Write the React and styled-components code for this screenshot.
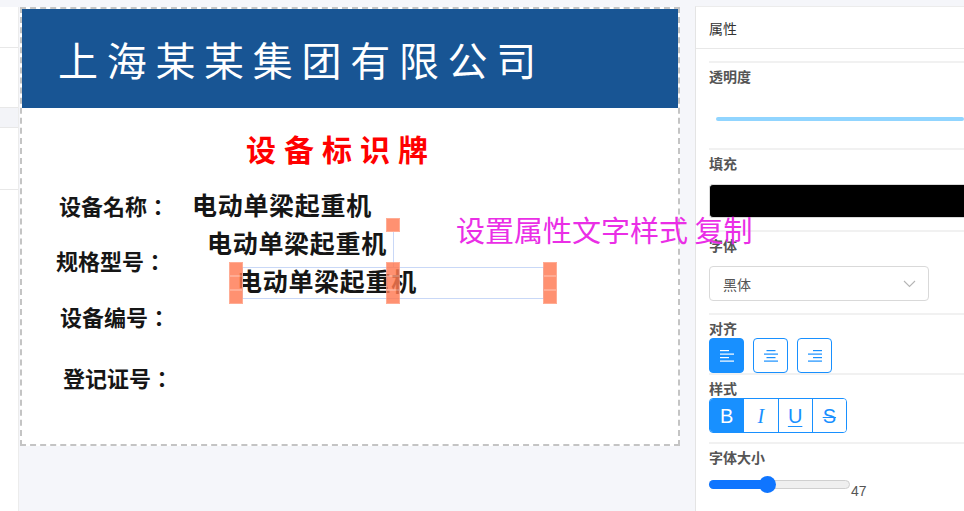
import React from "react";
import styled, { createGlobalStyle } from "styled-components";

const GlobalStyle = createGlobalStyle`
  html, body { margin: 0; padding: 0; }
  body {
    background: #f5f6fa;
    font-family: "Noto Sans CJK SC", "Noto Sans", sans-serif;
    overflow: hidden;
  }
  * { box-sizing: border-box; }
`;

const Page = styled.div`
  display: flex;
  height: 511px;
  width: 964px;
  padding-top: 7px;
  overflow: hidden;
`;

const Sidebar = styled.div`
  width: 19px;
  flex: none;
  background: #fff;
  border-right: 1px solid #ececec;
  display: flex;
  flex-direction: column;
`;

const SideRow = styled.div`
  height: ${(p) => p.$h}px;
  flex: none;
  border-bottom: 1px solid #e8e8e8;
  background: ${(p) => (p.$grey ? "#f3f4f8" : "#fff")};
`;

const Workspace = styled.div`
  flex: none;
  width: 676px;
  padding-left: 1px;
`;

const Canvas = styled.div`
  position: relative;
  z-index: 2;
  width: 660px;
  height: 439px;
  border: 2px dashed #c4c4c4;
  background: #fff;
`;

const Banner = styled.div`
  height: 99px;
  background: #185594;
`;

const CanvasText = styled.div`
  position: absolute;
  left: ${(p) => p.$x}px;
  top: ${(p) => p.$y}px;
  font-size: ${(p) => p.$size}px;
  line-height: 1;
  white-space: nowrap;
  color: ${(p) => p.$color || "#111"};
  font-weight: ${(p) => p.$weight || 400};
  letter-spacing: ${(p) => p.$ls || 0}px;
`;

const FieldLabel = styled(CanvasText)`
  font-family: "Noto Sans CJK TC", "Noto Sans CJK SC", sans-serif;
  font-weight: 700;
  font-size: 22px;
  color: #161616;
`;

const FieldValue = styled(CanvasText)`
  font-weight: 700;
  font-size: 25px;
  letter-spacing: 0.7px;
  color: #161616;
`;

const Handle = styled.div`
  position: absolute;
  left: ${(p) => p.$x}px;
  top: ${(p) => p.$y}px;
  width: 14px;
  height: 14px;
  background: #ff7a52;
  opacity: 0.82;
  box-shadow: inset 0 0 0 1px rgba(255, 255, 255, 0.25);
`;

const SelectBox = styled.div`
  position: absolute;
  left: ${(p) => p.$x}px;
  top: ${(p) => p.$y}px;
  width: ${(p) => p.$w}px;
  height: ${(p) => p.$h}px;
  border: 1px solid #c9d8f7;
`;

const VLine = styled.div`
  position: absolute;
  left: ${(p) => p.$x}px;
  top: ${(p) => p.$y}px;
  width: 1px;
  height: ${(p) => p.$h}px;
  background: #c9d8f7;
`;

const Panel = styled.div`
  position: relative;
  z-index: 1;
  margin-top: -1px;
  width: 269px;
  flex: none;
  background: #fff;
  border-left: 1px solid #e4e4e4;
  border-top: 1px solid #ececec;
`;

const PanelHeader = styled.div`
  height: 42px;
  display: flex;
  align-items: center;
  padding-left: 13px;
  font-size: 14px;
  color: #333;
  border-bottom: 1px solid #e8e8e8;
`;

const PanelBody = styled.div`
  padding: 12px 0 0 13px;
`;

const Section = styled.div`
  border-top: 2px solid #f1f1f1;
  padding-top: 3px;
  padding-bottom: ${(p) => p.$pb || 0}px;
`;

const Label = styled.div`
  height: 20px;
  line-height: 20px;
  font-size: 14px;
  font-weight: 700;
  color: #555;
`;

const Control = styled.div`
  margin-top: ${(p) => p.$mt || 0}px;
  margin-left: ${(p) => p.$ml || 0}px;
`;

const OpacityLine = styled.div`
  height: 4px;
  border-radius: 2px;
  background: #91d5ff;
`;

const ColorSwatch = styled.div`
  height: 34px;
  background: #000;
  border-radius: 4px 0 0 4px;
  border: 1px solid #d9d9d9;
  border-right: none;
`;

const SelectField = styled.div`
  width: 220px;
  height: 35px;
  border: 1px solid #d9d9d9;
  border-radius: 4px;
  display: flex;
  align-items: center;
  justify-content: space-between;
  padding: 0 12px 0 13px;
  font-size: 14px;
  color: #555;
`;

const ButtonRow = styled.div`
  display: flex;
  gap: 9px;
`;

const AlignButton = styled.div`
  width: 35px;
  height: 35px;
  border-radius: 4px;
  display: flex;
  align-items: center;
  justify-content: center;
  background: ${(p) => (p.$active ? "#1890ff" : "#fff")};
  border: 1px solid #1890ff;
  color: ${(p) => (p.$active ? "#fff" : "#1890ff")};
`;

const StyleGroup = styled.div`
  display: flex;
  width: 138px;
  height: 35px;
  border: 1px solid #1890ff;
  border-radius: 4px;
  overflow: hidden;
`;

const StyleButton = styled.div`
  flex: 1;
  display: flex;
  align-items: center;
  justify-content: center;
  background: ${(p) => (p.$active ? "#1890ff" : "#fff")};
  color: ${(p) => (p.$active ? "#fff" : "#1890ff")};
  border-left: ${(p) => (p.$first ? "none" : "1px solid #1890ff")};
  font-family: ${(p) => (p.$serif ? '"Liberation Serif", serif' : '"Liberation Sans", Arial, sans-serif')};
  font-style: ${(p) => (p.$italic ? "italic" : "normal")};
  text-decoration: ${(p) => p.$deco || "none"};
  text-decoration-thickness: 1px;
  text-underline-offset: 3px;
  font-size: 20px;
  line-height: 1;
`;

const SliderRow = styled.div`
  display: flex;
  align-items: flex-end;
  margin-top: 13px;
`;

const Track = styled.div`
  position: relative;
  width: 141px;
  height: 9px;
  border-radius: 5px;
  background: #efefef;
  border: 1px solid #cfcfcf;
  margin-bottom: 4px;
`;

const TrackFill = styled.div`
  position: absolute;
  left: -1px;
  top: -1px;
  bottom: -1px;
  border-radius: 5px 0 0 5px;
  background: #0f75ff;
`;

const Thumb = styled.div`
  position: absolute;
  top: 50%;
  width: 17px;
  height: 17px;
  margin-left: -8px;
  margin-top: -8.5px;
  border-radius: 50%;
  background: #0f75ff;
`;

const SliderValue = styled.div`
  font-family: "Liberation Sans", Arial, sans-serif;
  font-size: 14px;
  color: #555;
  line-height: 14px;
  margin-left: 1px;
  margin-bottom: -5px;
`;

const AlignIcon = ({ mode }) => {
  const rows = [
    { w: 9, y: 1 },
    { w: 14, y: 4.5 },
    { w: 9, y: 8 },
    { w: 14, y: 11.5 },
  ];
  return (
    <svg width="14" height="13" viewBox="0 0 14 13">
      {rows.map((r, i) => {
        const x = mode === "left" ? 0 : mode === "center" ? (14 - r.w) / 2 : 14 - r.w;
        return <rect key={i} x={x} y={r.y} width={r.w} height="1.2" fill="currentColor" />;
      })}
    </svg>
  );
};

const Chevron = () => (
  <svg width="13" height="8" viewBox="0 0 13 8">
    <path d="M1 1 L6.5 6.5 L12 1" fill="none" stroke="#b5b5b5" strokeWidth="1.1" />
  </svg>
);

// canvas coordinates are relative to the canvas padding box at page (22, 9)
const OX = 22;
const OY = 9;

const handles = [
  [386, 218],
  [229, 262], [229, 276], [229, 290],
  [386, 262], [386, 276], [386, 290],
  [543, 262], [543, 276], [543, 290],
];

export default function App() {
  const sliderPct = 58 / 141;
  return (
    <>
      <GlobalStyle />
      <Page>
        <Sidebar>
          <SideRow $h={41} />
          <SideRow $h={60} />
          <SideRow $h={20} $grey />
          <SideRow $h={62} />
        </Sidebar>
        <Workspace>
          <Canvas>
            <Banner />
            <CanvasText $x={58 - OX} $y={38.5 - OY} $size={40} $ls={8.7} $color="#fff">
              上海某某集团有限公司
            </CanvasText>
            <CanvasText $x={246 - OX} $y={133 - OY} $size={30} $ls={8} $color="#f00" $weight={700}>
              设备标识牌
            </CanvasText>
            <FieldLabel $x={59 - OX} $y={193.5 - OY}>设备名称：</FieldLabel>
            <FieldValue $x={192 - OX} $y={192 - OY}>电动单梁起重机</FieldValue>
            <FieldValue $x={207 - OX} $y={230 - OY}>电动单梁起重机</FieldValue>
            <FieldLabel $x={56 - OX} $y={249 - OY}>规格型号：</FieldLabel>
            <FieldValue $x={237 - OX} $y={268 - OY}>电动单梁起重机</FieldValue>
            <FieldLabel $x={60 - OX} $y={305 - OY}>设备编号：</FieldLabel>
            <FieldLabel $x={63 - OX} $y={365.5 - OY}>登记证号：</FieldLabel>

            <VLine $x={393 - OX} $y={232 - OY} $h={36} />
            <SelectBox $x={242 - OX} $y={267 - OY} $w={302} $h={32} />
            {handles.map(([x, y], i) => (
              <Handle key={i} $x={x - OX} $y={y - OY} />
            ))}

            <CanvasText $x={456 - OX} $y={214.5 - OY} $size={29} $color="#ea2ee6">
              设置属性文字样式 复制
            </CanvasText>
          </Canvas>
        </Workspace>
        <Panel>
          <PanelHeader>属性</PanelHeader>
          <PanelBody>
            <Section $pb={27}>
              <Label>透明度</Label>
              <Control $mt={31} $ml={7}>
                <OpacityLine />
              </Control>
            </Section>
            <Section $pb={12}>
              <Label>填充</Label>
              <Control $mt={11}>
                <ColorSwatch />
              </Control>
            </Section>
            <Section $pb={12}>
              <Label>字体</Label>
              <Control $mt={11}>
                <SelectField>
                  <span>黑体</span>
                  <Chevron />
                </SelectField>
              </Control>
            </Section>
            <Section>
              <Label>对齐</Label>
              <ButtonRow>
                <AlignButton $active>
                  <AlignIcon mode="left" />
                </AlignButton>
                <AlignButton>
                  <AlignIcon mode="center" />
                </AlignButton>
                <AlignButton>
                  <AlignIcon mode="right" />
                </AlignButton>
              </ButtonRow>
            </Section>
            <Section $pb={9}>
              <Label>样式</Label>
              <StyleGroup>
                <StyleButton $active $first>B</StyleButton>
                <StyleButton $serif $italic>I</StyleButton>
                <StyleButton $deco="underline">U</StyleButton>
                <StyleButton $deco="line-through">S</StyleButton>
              </StyleGroup>
            </Section>
            <Section>
              <Label>字体大小</Label>
              <SliderRow>
                <Track>
                  <TrackFill style={{ width: `${sliderPct * 100}%` }} />
                  <Thumb style={{ left: `${sliderPct * 100}%` }} />
                </Track>
                <SliderValue>47</SliderValue>
              </SliderRow>
            </Section>
          </PanelBody>
        </Panel>
      </Page>
    </>
  );
}
